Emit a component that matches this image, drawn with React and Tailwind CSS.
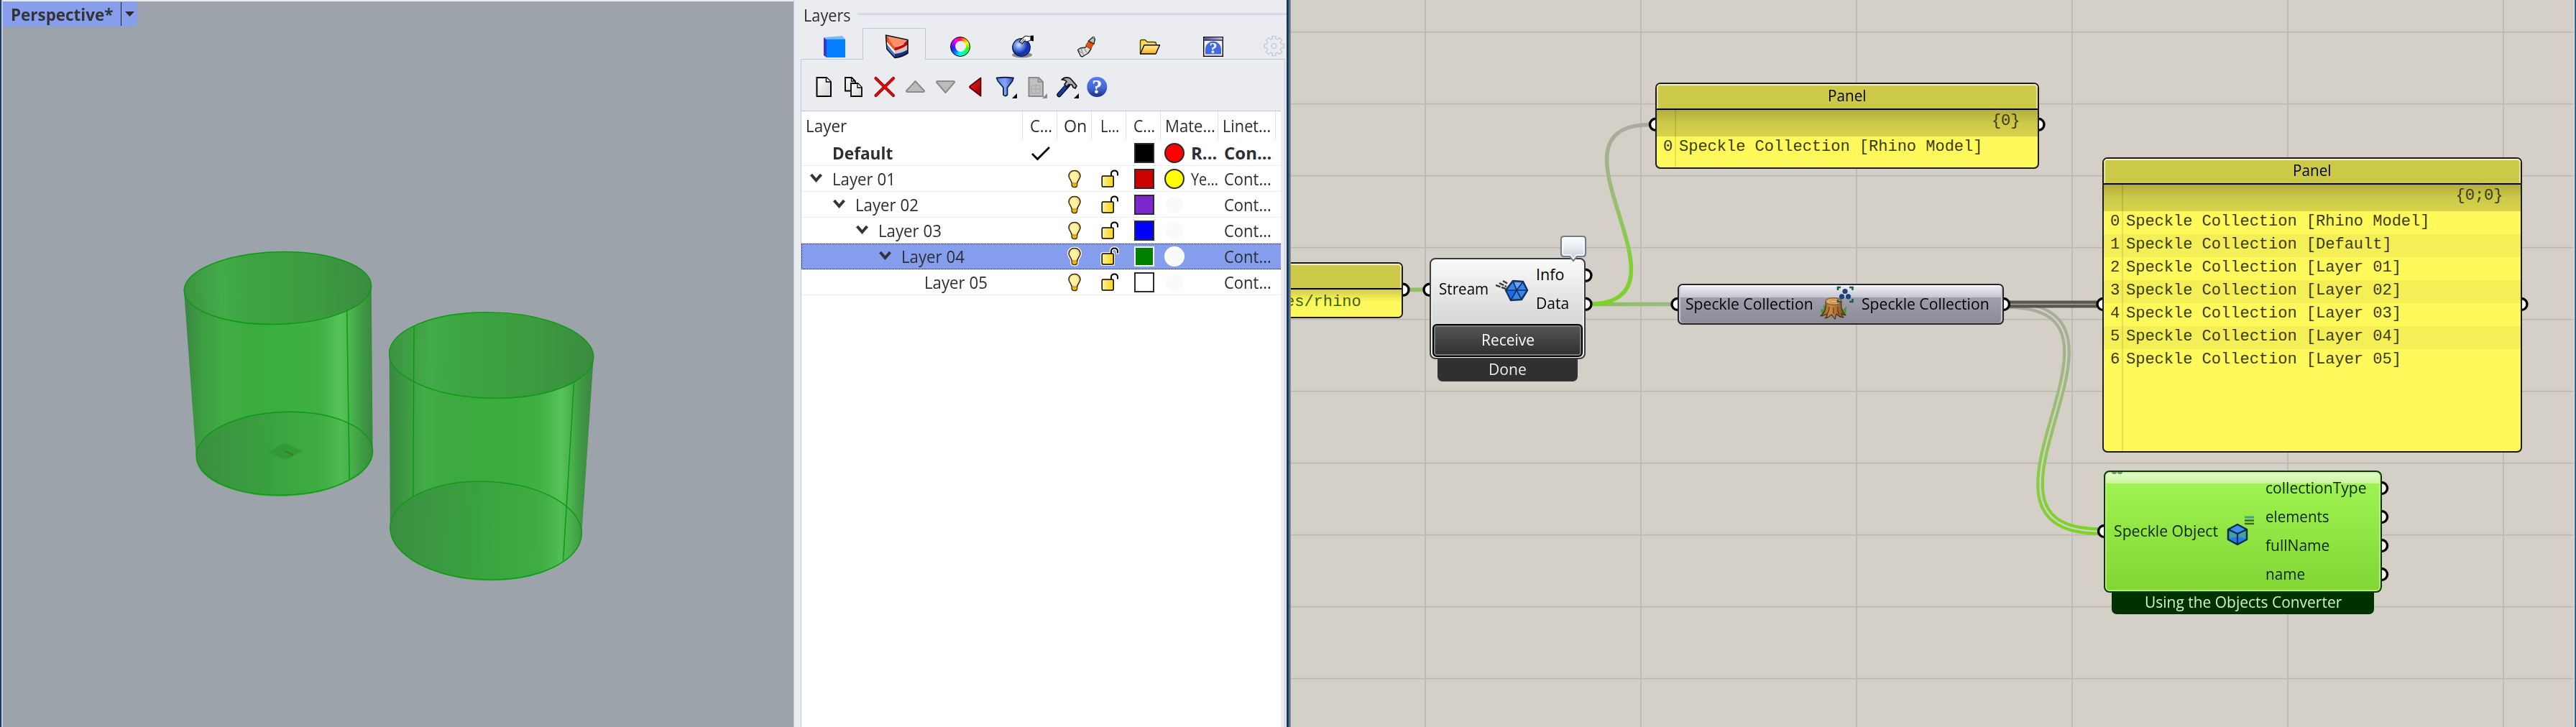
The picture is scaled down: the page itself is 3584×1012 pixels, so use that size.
import React, { useLayoutEffect, useRef, useState } from "react";

/* Text squeezed or stretched horizontally to a given width */
function Fit({ w, className = "", children }) {
  const ref = useRef(null);
  const [k, setK] = useState(1);
  useLayoutEffect(() => {
    setK(w / ref.current.offsetWidth);
  }, [w]);
  return (
    <span className={"block shrink-0 text-left " + className} style={{ width: w }}>
      <span ref={ref} className="inline-block origin-left whitespace-pre" style={{ transform: `scaleX(${k})` }}>
        {children}
      </span>
    </span>
  );
}

/* ---------- viewport ---------- */
function Viewport() {
  return (
    <section className="relative mt-[2px] h-[1010px] w-[1100px] shrink-0 overflow-hidden bg-[#9ca3ab]">
      <svg className="absolute inset-0" width="1100" height="1010" viewBox="4 2 1100 1010">
        <defs>
          <linearGradient id="body" x1="0" x2="1" y1="0" y2="0">
            <stop offset="0" stopColor="#3b8642" />
            <stop offset=".08" stopColor="#3c9a41" />
            <stop offset=".21" stopColor="#41ac45" />
            <stop offset=".36" stopColor="#3aac3f" />
            <stop offset=".55" stopColor="#3bb040" />
            <stop offset=".72" stopColor="#40b045" />
            <stop offset=".83" stopColor="#55c35a" />
            <stop offset=".88" stopColor="#4bb54f" />
            <stop offset=".94" stopColor="#3f9d43" />
            <stop offset="1" stopColor="#3b8640" />
          </linearGradient>
          <linearGradient id="body2" x1="0" x2="1" y1="0" y2="0">
            <stop offset="0" stopColor="#3b8642" />
            <stop offset=".08" stopColor="#3c9a41" />
            <stop offset=".17" stopColor="#43ac48" />
            <stop offset=".3" stopColor="#3ca940" />
            <stop offset=".6" stopColor="#3bad3f" />
            <stop offset=".73" stopColor="#3fb043" />
            <stop offset=".84" stopColor="#55c35a" />
            <stop offset=".89" stopColor="#4ab14e" />
            <stop offset=".95" stopColor="#3d9341" />
            <stop offset="1" stopColor="#3b8640" />
          </linearGradient>
          <linearGradient id="inside" x1="0" x2="1" y1="0" y2="0">
            <stop offset="0" stopColor="#3b9440" />
            <stop offset=".2" stopColor="#43aa49" />
            <stop offset=".35" stopColor="#3da441" />
            <stop offset=".7" stopColor="#3c9c40" />
            <stop offset="1" stopColor="#3b8b3f" />
          </linearGradient>
          <linearGradient id="floor" x1="0" x2="1" y1="0" y2="0">
            <stop offset="0" stopColor="#3a8e40" stopOpacity=".9" />
            <stop offset=".35" stopColor="#3a9a40" stopOpacity=".8" />
            <stop offset=".7" stopColor="#3ba440" stopOpacity=".35" />
            <stop offset="1" stopColor="#3ba440" stopOpacity=".1" />
          </linearGradient>
        </defs>
        <path d="M256 405L273 638A122.8 57.8 -2 0 0 518.6 628L516.7 397A130.3 50.3 -2 0 0 256 405Z" fill="url(#body)" />
        <ellipse cx="386.4" cy="401" rx="130.3" ry="50.3" transform="rotate(-1.7 386.4 401)" fill="url(#inside)" stroke="#0b9a10" strokeWidth="1.4" />
        <ellipse cx="395.9" cy="631.2" rx="122.8" ry="57.8" transform="rotate(-2 395.9 631.2)" fill="url(#floor)" stroke="#0b9a10" strokeWidth="1.4" />
        <path d="M482.7 432.3L486.2 667" stroke="#0b9a10" strokeWidth="1.5" />
        <path d="M372 629.5L396 617L421 628L397 640Z" fill="#329a35" />
        <path d="M397 628L408 622.5" stroke="#22a52a" strokeWidth="2" />
        <path d="M397 628L408 633.5" stroke="#3f7c22" strokeWidth="2" />

        <path d="M541.6 494L542.8 737A133.3 68.2 2.2 0 0 809.3 743L826 495A142.2 59.7 1.3 0 0 541.6 494Z" fill="url(#body2)" />
        <ellipse cx="683.7" cy="494.6" rx="142.2" ry="59.7" transform="rotate(1.3 683.7 494.6)" fill="url(#inside)" stroke="#0b9a10" strokeWidth="1.4" />
        <ellipse cx="676" cy="738.5" rx="133.3" ry="68.2" transform="rotate(2.2 676 738.5)" fill="url(#floor)" stroke="#0b9a10" strokeWidth="1.4" />
        <path d="M798.6 532L783.6 780.7M576 454L574.8 691.7" stroke="#0b9a10" strokeWidth="1.5" />
      </svg>
      <div className="relative flex h-[35px] w-[187px] items-center rounded-br-[5px] bg-[#869eec] pl-[11px] text-[24px] leading-[35px] font-bold text-[#333436]">
        <Fit w={142}>Perspective*</Fit>
        <span className="ml-[11px] h-[33px] w-px bg-[#222]" />
        <svg className="ml-[5px]" width="13" height="7" viewBox="0 0 13 7"><path d="M0 0H13L6.500 7Z" fill="#2b2b2e" /></svg>
      </div>
    </section>
  );
}

/* ---------- tab icons, 34 x 34 ---------- */
const TabSvg = ({ children }) => <svg width="34" height="34" viewBox="0 0 34 34" className="shrink-0">{children}</svg>;

const BoxIcon = () => (
  <TabSvg>
    <path d="M2 4L6 7V32L2 29Z" fill="#3a35cc" />
    <path d="M2 4L28 2L32 6.500H6Z" fill="#77bbff" />
    <path d="M6 6.500H32V32H6Z" fill="#047fff" />
  </TabSvg>
);
const LayersIcon = () => (
  <TabSvg>
    <path d="M1.500 1L32 7.500V26Q24 31.500 14 32.500L3 20.500Z" fill="#1b2f82" />
    <path d="M1.500 11L14 27Q24 26 32 21V14L1.500 6Z" fill="#c9c9c9" />
    <path d="M1.500 8L14 22.500V27L2 13Z" fill="#fff" />
    <path d="M2 13L14 27.500V31L3 20Z" fill="#4d74e0" />
    <path d="M1.500 2L14 18Q24 17 32 9V14Q24 20 14 22.500L1.500 8Z" fill="#d10000" />
    <path d="M1.500 2L14 18V22.500L1.500 8Z" fill="#ff5522" />
    <path d="M1.500 1L32 7.500Q26 14.500 14 17.500Z" fill="#ff9068" />
    <path d="M1.500 1L32 7.500V26Q24 31.500 14 32.500L3 20.500Z" fill="none" stroke="#111" strokeWidth="1.6" strokeLinejoin="round" />
  </TabSvg>
);
const WheelIcon = () => (
  <div className="flex h-7 w-7 items-center justify-center rounded-full border-[1.500px] border-black bg-[conic-gradient(#ff1040,#ff9000_30deg,#ffff00_60deg,#40ff00_100deg,#00ff90_145deg,#00ffff_185deg,#0080ff_220deg,#2020ff_255deg,#a000ff_290deg,#ff00ff_325deg,#ff1040_360deg)]">
    <div className="h-[15px] w-[15px] rounded-full bg-[#ebecf0]" />
  </div>
);
const SphereIcon = () => (
  <TabSvg>
    <defs>
      <radialGradient id="sph" cx=".36" cy=".36" r=".65">
        <stop offset="0" stopColor="#d7e6ff" />
        <stop offset=".35" stopColor="#6d92ea" />
        <stop offset=".75" stopColor="#1230a8" />
        <stop offset="1" stopColor="#1a3fc0" />
      </radialGradient>
    </defs>
    <ellipse cx="15" cy="28.500" rx="14" ry="4" fill="#8a8b8f" />
    <circle cx="14" cy="18" r="12.300" fill="url(#sph)" stroke="#0a1238" strokeWidth="1.200" />
    <path d="M11 10L17 4L20 2L27 3V8L22 10L18 9L15 13L13 11Z" fill="#fff" stroke="#222" strokeWidth="1.100" />
    <path d="M13 12L18 6M16 12L20 7" stroke="#222" strokeWidth=".9" />
    <path d="M27 1.500H31V9.500L27 8.500Z" fill="#000" />
  </TabSvg>
);
const TubeIcon = () => (
  <TabSvg>
    <path d="M4.500 21.500L8 19L15 18L18 15L23 20L19 26L11 31L8.500 30Z" fill="#dcdcdc" stroke="#222" strokeWidth="1.400" strokeLinejoin="round" />
    <path d="M9 20L13 29M6 22L10 26M13 18.500L17 25" stroke="#777" strokeWidth="1" />
    <path d="M15.500 15.500L19.500 9L27 13L22.500 20Q19 19 15.500 15.500Z" fill="#e4500f" stroke="#7c2c08" strokeWidth=".8" />
    <path d="M19.500 9L25 4L28.500 6.500L27 13Z" fill="#bbb" stroke="#222" strokeWidth="1.300" />
    <path d="M25 4L27 3L28.500 6.500" fill="#eee" stroke="#222" />
  </TabSvg>
);
const FolderIcon = () => (
  <TabSvg>
    <defs><linearGradient id="fold" x1="0" y1="0" x2="0" y2="1"><stop offset="0" stopColor="#fff3a0" /><stop offset="1" stopColor="#f8b010" /></linearGradient></defs>
    <path d="M3.500 27V9.500Q3.500 7.500 5.500 7.500H10L13.500 10.500H23Q25.500 10.500 25.500 13V18" fill="#f7dc4a" stroke="#4c3a00" strokeWidth="1.400" />
    <path d="M3.500 27L9 14.800H30.500L25 27Z" fill="url(#fold)" stroke="#000" strokeWidth="1.400" strokeLinejoin="round" />
  </TabSvg>
);
const HelpWindowIcon = () => (
  <TabSvg>
    <defs><linearGradient id="bar" x1="0" y1="0" x2="1" y2="0"><stop offset="0" stopColor="#4a44b4" /><stop offset="1" stopColor="#c0bff0" /></linearGradient></defs>
    <rect x="3.700" y="3.700" width="26.600" height="26.600" fill="#f3f3f6" stroke="#000" strokeWidth="1.400" />
    <rect x="4.400" y="4.400" width="25.200" height="3" fill="url(#bar)" />
    <path d="M4 8H30" stroke="#000" strokeWidth="1.200" />
    <path d="M6 27.500V21A11 11.500 0 0 1 28 21V27.500Z" fill="#4468e0" />
    <text x="17" y="26" textAnchor="middle" fill="#fff" fontFamily="Liberation Serif, serif" fontWeight="700" fontSize="22">?</text>
  </TabSvg>
);
const GearIcon = () => (
  <TabSvg>
    <path d="M14.200 3.500H18.800V7L21.500 8L24 5.500L27.500 9L25.200 11.700L26.500 14.500H30.500V19.500H26.500L25.200 22.300L27.700 25L24.200 28.500L21.500 26L18.800 27.200V30.500H14.200V27.200L11.500 26L8.800 28.500L5.300 25L7.800 22.300L6.500 19.500H3V14.500H6.500L7.800 11.700L5.500 9L9 5.500L11.500 8L14.200 7Z" fill="none" stroke="#c3cde0" strokeWidth="1.600" strokeLinejoin="round" />
    <circle cx="16.500" cy="17" r="3.500" fill="none" stroke="#c3cde0" strokeWidth="1.600" />
  </TabSvg>
);

/* ---------- toolbar icons ---------- */
const BarSvg = ({ children }) => <svg width="42.200" height="32" viewBox="-4 0 42.200 32" className="shrink-0 overflow-visible">{children}</svg>;
const Corner = ({ x = 25, fill = "#000" }) => <path d={`M${x} 32L${x + 7} 25V32Z`} fill={fill} />;

function ToolbarIcons() {
  return (
    <div className="flex h-[71px] items-center pt-[4px] pl-[10px]">
      <svg width="0" height="0" className="absolute">
        <defs>
          <linearGradient id="page" x1="0" y1="0" x2="1" y2="1"><stop offset="0" stopColor="#fff" /><stop offset="1" stopColor="#d2d2d2" /></linearGradient>
          <linearGradient id="redTri" x1="0" y1="0" x2="1" y2="1"><stop offset="0" stopColor="#ff2020" /><stop offset="1" stopColor="#8a0000" /></linearGradient>
          <linearGradient id="qm" x1="0" y1="0" x2="0" y2="1"><stop offset="0" stopColor="#5a7df2" /><stop offset=".55" stopColor="#4664d8" /><stop offset="1" stopColor="#1c2f88" /></linearGradient>
          <linearGradient id="cone" x1="0" y1="0" x2="1" y2="0"><stop offset="0" stopColor="#5581ec" /><stop offset=".5" stopColor="#86a6ff" /><stop offset="1" stopColor="#2d4cb0" /></linearGradient>
        </defs>
      </svg>
      <BarSvg><path d="M7.500 3H21L27 9V29H7.500Z" fill="url(#page)" stroke="#000" strokeWidth="2" /><path d="M20.500 3V9H27" fill="#fff" stroke="#000" strokeWidth="1.500" /></BarSvg>
      <BarSvg>
        <path d="M5 3H14L19 8V21.500H5Z" fill="url(#page)" stroke="#000" strokeWidth="1.800" /><path d="M13.500 3V8H19" fill="none" stroke="#000" strokeWidth="1.300" />
        <path d="M13 11H22.500L28 16.500V29H13Z" fill="url(#page)" stroke="#000" strokeWidth="1.800" /><path d="M22 11V17H28" fill="#fff" stroke="#000" strokeWidth="1.300" />
      </BarSvg>
      <BarSvg><path d="M5.500 4L30 28M30 4L5.500 28" stroke="#7c0606" strokeWidth="4.200" strokeLinecap="round" /><path d="M5.500 4L30 28M30 4L5.500 28" stroke="#dc0a0a" strokeWidth="2.800" strokeLinecap="round" /></BarSvg>
      <BarSvg><path d="M17.500 8L30 21.500Q30 23 28.500 23H6.500Q5 23 5 21.500Z" fill="#bcbcbc" stroke="#8c8c8c" strokeWidth="2" strokeLinejoin="round" /></BarSvg>
      <BarSvg><path d="M17.500 24L30 9.500Q30 8 28.500 8H6.500Q5 8 5 9.500Z" fill="#bcbcbc" stroke="#8c8c8c" strokeWidth="2" strokeLinejoin="round" /></BarSvg>
      <BarSvg><path d="M24.500 3.500V28.500L9.500 17Q8.500 16 9.500 15Z" fill="url(#redTri)" stroke="#5a0000" strokeWidth="1.800" strokeLinejoin="round" /></BarSvg>
      <BarSvg><path d="M4.500 3.500Q16 2 28 3.500L26.500 8L19.500 17V27Q16.500 30 14 27V17L6.500 8Z" fill="url(#cone)" stroke="#13234f" strokeWidth="1.800" strokeLinejoin="round" /><Corner x={26} /></BarSvg>
      <BarSvg><path d="M7.500 3H21L27 9V29H7.500Z" fill="#c0c0c0" stroke="#8a8a8a" strokeWidth="2" /><path d="M20.500 3V9H27" fill="none" stroke="#8a8a8a" strokeWidth="1.500" /><path d="M11 14H23V25H11ZM17 14V25M11 19H23" fill="none" stroke="#a6a6a6" strokeWidth="1" /><Corner x={26} fill="#8a8a8a" /></BarSvg>
      <BarSvg>
        <path d="M19 13L6.500 27" stroke="#0a1230" strokeWidth="6.500" strokeLinecap="round" />
        <path d="M19 12L6.800 26.700" stroke="#1f3e9c" strokeWidth="3.800" strokeLinecap="round" />
        <path d="M10 6Q15 1 22 4L29 12L31 14.500L29 18L26 16.500L24.500 13L20 12.500L17 16L14 12.500L17 8.500Q14 5.500 10 6Z" fill="#a9a9a9" stroke="#111" strokeWidth="1.700" strokeLinejoin="round" />
        <Corner x={27} />
      </BarSvg>
      <BarSvg><circle cx="17.300" cy="16" r="14" fill="url(#qm)" /><text x="17.300" y="25.500" textAnchor="middle" fill="#fff" fontFamily="Liberation Serif, serif" fontWeight="700" fontSize="28">?</text></BarSvg>
    </div>
  );
}

/* ---------- layer rows ---------- */
const halo = "[filter:drop-shadow(1px_0_0_white)_drop-shadow(-1px_0_0_white)_drop-shadow(0_1px_0_white)_drop-shadow(0_-1px_0_white)]";
const Bulb = ({ glow }) => (
  <svg width="18" height="26" viewBox="0 0 18 26" className={"ml-[15px] " + (glow ? halo : "")}>
    <defs><radialGradient id="bulb" cx=".45" cy=".4" r=".6"><stop offset="0" stopColor="#fff7ae" /><stop offset=".5" stopColor="#fff0a0" /><stop offset="1" stopColor="#f0b040" /></radialGradient></defs>
    <path d="M9 1.500C4 1.500 1 4.800 1 9C1 13 5 14.500 5.300 20V22.500Q6 24.500 9 24.500Q12 24.500 12.500 22.500V20C13 14.500 17 13 17 9C17 4.800 14 1.500 9 1.500Z" fill="url(#bulb)" stroke="#3a2600" strokeWidth="1.500" />
    <path d="M5.800 20H12.200V22.300Q11 23.800 9 23.800Q7 23.800 5.800 22.300Z" fill="#eab500" />
    <path d="M5.500 19H12.500" stroke="#a86f00" strokeWidth="1" />
  </svg>
);
const Lock = ({ glow }) => (
  <svg width="26" height="26" viewBox="0 0 26 26" className={"ml-[13px] " + (glow ? halo : "")}>
    <defs><linearGradient id="lock" x1="0" y1="0" x2="1" y2="0"><stop offset="0" stopColor="#fff09a" /><stop offset="1" stopColor="#fad21a" /></linearGradient></defs>
    <path d="M14 9V6Q14 1.500 18.500 1.500Q23 1.500 23 6V8.500" fill="none" stroke="#000" strokeWidth="2" />
    <rect x="1.200" y="9" width="16" height="15" rx="1.500" fill="url(#lock)" stroke="#000" strokeWidth="1.500" />
  </svg>
);

const COLS = "grid grid-cols-[308px_48px_48px_48px_48px_80px_80px]";

const rows = [
  { name: "Default", w: 84, pad: "pl-[43px]", current: true, swatch: "bg-black", dot: "bg-[#ff0000] border-[#2b2c30]", mat: ["R...", 36], line: ["Con...", 66], bold: true },
  { name: "Layer 01", w: 88, pad: "pl-[12px]", swatch: "bg-[#cc0000]", dot: "bg-[#ffff00] border-[#2b2c30]", mat: ["Ye...", 38], line: ["Cont...", 66], open: true },
  { name: "Layer 02", w: 88, pad: "pl-[44px]", swatch: "bg-[#7d26cd]", dot: "bg-[#fafafa] border-white", line: ["Cont...", 66], open: true },
  { name: "Layer 03", w: 88, pad: "pl-[76px]", swatch: "bg-[#0000ff]", dot: "bg-[#fafafa] border-white", line: ["Cont...", 66], open: true },
  { name: "Layer 04", w: 88, pad: "pl-[108px]", swatch: "bg-[#008000]", dot: "bg-[#fafafa] border-white", line: ["Cont...", 66], open: true, selected: true },
  { name: "Layer 05", w: 88, pad: "pl-[171px]", swatch: "bg-white", dot: "bg-[#fafafa] border-white", line: ["Cont...", 66] },
];

function LayerRow({ r }) {
  return (
    <div className={`${COLS} relative h-9 ${r.bold ? "font-bold" : ""} ${r.selected ? "bg-[#859eee]" : "border-b border-[#ececee]"}`}>
      {r.selected && <div className="absolute inset-0 border-y border-l border-dotted border-[#1b1b1b]" />}
      <div className={`flex ${r.pad}`}>
        {r.open && (
          <svg width="17" height="13" viewBox="0 0 17 13" className="mt-[10px] mr-[14px] shrink-0"><path d="M1.500 2L8.500 10L15.500 2" fill="none" stroke="#333438" strokeWidth="4" /></svg>
        )}
        <Fit w={r.w}>{r.name}</Fit>
      </div>
      <div>
        {r.current && <svg width="27" height="21" viewBox="0 0 27 21" className="mt-[8px] ml-[12px]"><path d="M1 11L8.500 18.500L25 2" fill="none" stroke="#000" strokeWidth="2.800" /></svg>}
      </div>
      <div className="pt-[5px]">{!r.current && <Bulb glow={r.selected} />}</div>
      <div className="pt-[5px]">{!r.current && <Lock glow={r.selected} />}</div>
      <div className="pt-1 pl-[11px]"><div className={`h-7 w-7 border-2 ${r.selected ? "border-white" : "border-[#2b2c30]"} ${r.swatch}`} /></div>
      <div className="flex pt-1 pl-[5px]">
        <div className={`h-7 w-7 shrink-0 rounded-full border-2 ${r.dot}`} />
        {r.mat && <Fit w={r.mat[1]} className="-mt-1 ml-[9px]">{r.mat[0]}</Fit>}
      </div>
      <div className="pl-[8px]"><Fit w={r.line[1]}>{r.line[0]}</Fit></div>
    </div>
  );
}

function LayersPanel() {
  const tabs = [BoxIcon, LayersIcon, WheelIcon, SphereIcon, TubeIcon, FolderIcon, HelpWindowIcon];
  const heads = [["Layer", 57, "pl-[6px]"], ["C...", 31, "pl-[10px]"], ["On", 32, "pl-[9px]"], ["L...", 26, "pl-[12px]"], ["C...", 30, "pl-[10px]"], ["Mate...", 70, "pl-[6px]"], ["Linet...", 67, "pl-[6px]"]];
  return (
    <section className="flex h-[1012px] w-[686px] shrink-0 flex-col border-l border-[#c3cbe0] bg-[#ebecf0] pl-[9px] text-[24px] leading-9 text-[#2d2e33]">
      <div className="flex h-[39px] items-center pl-[4px]">
        <Fit w={66} className="mt-[3px]">Layers</Fit>
        <div className="ml-[9px] h-[3px] flex-1 border-y border-[#c9cfe2]" />
      </div>
      <div className="flex h-[44px] w-[674px] border-b border-[#bdc6dc]">
        {tabs.map((Icon, i) => (
          <div key={i} className={`flex h-[44px] shrink-0 items-center justify-center pt-[7px] pl-[8px] ${i === 0 ? "w-[86px] pl-[6px]" : "w-[88px]"} ${i === 1 ? "rounded-t-[1px] border border-b-0 border-[#bdc6dc] bg-[#ebecf0]" : ""}`}>
            <Icon />
          </div>
        ))}
        <div className="flex w-[62px] shrink-0 items-center justify-end pt-[7px]"><GearIcon /></div>
      </div>
      <div className="w-[674px] flex-1 border-x border-[#bdc6dc]">
        <ToolbarIcons />
        <div className="h-[858px] w-[667px] border-t border-[#bdc6dc] bg-white">
          <div className={`${COLS} h-[40px] leading-[40px]`}>
            {heads.map(([t, w, p], i) => (
              <div key={i} className={`border-r border-[#dcdee6] ${p}`}><Fit w={w}>{t}</Fit></div>
            ))}
          </div>
          {rows.map((r) => <LayerRow key={r.name} r={r} />)}
        </div>
      </div>
    </section>
  );
}

/* ---------- node canvas ---------- */
function Wires() {
  const grips = [[1952, 403.3], [1989, 403.3], [2206, 383.3], [2206, 423.3], [2303.500, 173.300], [2836, 173.300], [2334, 423.500], [2787.500, 423.500], [2926, 423.500], [3508, 423.500], [2927.500, 739.500], [3313.500, 679.500], [3313.500, 719.500], [3313.500, 759.500], [3313.500, 799.500]];
  const hs = [44.7, 144.7, 244.7, 344.7, 444.7, 544.7, 644.7, 744.7, 844.7, 944.7];
  const vs = [1983, 2283, 2583, 2883, 3183, 3483];
  const loop = "M2792 424.500C3012 424.500 2702 739.500 2922 739.500";
  return (
    <svg className="absolute inset-0" width="1785" height="1012" viewBox="1796 0 1785 1012">
      <defs>
        <linearGradient id="w1" gradientUnits="userSpaceOnUse" x1="0" y1="424" x2="0" y2="173"><stop offset="0" stopColor="#7bd424" /><stop offset=".25" stopColor="#84cf38" /><stop offset=".6" stopColor="#9bbd78" /><stop offset="1" stopColor="#aaaa9f" /></linearGradient>
        <linearGradient id="w2" gradientUnits="userSpaceOnUse" x1="2215" y1="0" x2="2330" y2="0"><stop offset="0" stopColor="#86c653" /><stop offset="1" stopColor="#9fb68c" /></linearGradient>
        <linearGradient id="w3" gradientUnits="userSpaceOnUse" x1="0" y1="424" x2="0" y2="740"><stop offset="0" stopColor="#a9ab9e" /><stop offset=".35" stopColor="#9dba7f" /><stop offset=".75" stopColor="#8acb4a" /><stop offset="1" stopColor="#7bd424" /></linearGradient>
      </defs>
      {hs.map((y) => <path key={y} d={`M1796 ${y}H3581`} stroke="#bcb8b0" strokeWidth="1.800" />)}
      {vs.map((x) => <path key={x} d={`M${x} 0V1012`} stroke="#bcb8b0" strokeWidth="1.600" />)}
      <path d="M1955 403.300H1985" stroke="#92c065" strokeWidth="5.600" />
      <path d="M2210 423.500H2330" stroke="url(#w2)" strokeWidth="5.600" />
      <path d="M2208 423.500C2375 423.500 2130 173.500 2297 173.500" fill="none" stroke="url(#w1)" strokeWidth="5.600" />
      <path d={loop} fill="none" stroke="url(#w3)" strokeWidth="10.800" />
      <path d={loop} fill="none" stroke="#d4cfc7" strokeWidth="2.400" />
      <path d="M2790 423.500H2924" stroke="#57574f" strokeWidth="10" />
      <path d="M2790 423.500H2924" stroke="#a9a79c" strokeWidth="1.600" />
      {grips.map(([x, y], i) => <circle key={i} cx={x} cy={y} r="8" fill="#fff" stroke="#000" strokeWidth="3.400" />)}
    </svg>
  );
}

const MONO = "font-['Liberation_Mono',monospace] text-[22px] whitespace-pre text-[#3c3b0c]";

function Panel({ className, path, lines }) {
  return (
    <div className={`absolute flex flex-col overflow-hidden rounded-[7px] border-2 border-[#1c1c1c] bg-[#fff95b] ${className}`}>
      <div className="flex h-[36px] shrink-0 justify-center rounded-t-[5px] border-b-2 border-black bg-[#ccc848] text-[21.500px] leading-[32px] text-black shadow-[inset_0_2px_0_#f4f2c4,inset_2px_0_0_#e4e2a0,inset_-2px_0_0_#e4e2a0]">
        <Fit w={54}>Panel</Fit>
      </div>
      <div className="relative flex-1">
        <div className={`h-[37px] bg-gradient-to-b from-[#b3ae3c] via-[#cdc949] to-[#d6d24c] pr-[24px] text-right leading-[32px] ${MONO}`}>{path}</div>
        {lines.map((l, i) => (
          <div key={i} className={`h-8 ${i % 2 ? "bg-[#f4ef57]" : ""}`}>
            <div className={`flex h-[29px] leading-[29px] ${MONO}`}>
              <span className="w-[31px] pl-[9px]">{i}</span>
              <span>{l}</span>
            </div>
          </div>
        ))}
        <div className="absolute inset-y-0 left-[25px] w-[2px] bg-black/10" />
      </div>
    </div>
  );
}

const SpeckleCube = ({ className }) => (
  <svg width="32" height="34" viewBox="0 0 32 34" className={className}>
    <path d="M16 3L29 10V24L16 31L3 24V10Z" fill="#2478f6" />
    <path d="M16 3L29 10L16 16L3 10Z" fill="#3b8ff0" />
    <path d="M3 10L16 16V20L3 23ZM29 10L16 16V20L29 23Z" fill="#3fa3a0" />
    <path d="M3 10L16 16L29 10M16 16V31" fill="none" stroke="#0e2c4c" strokeWidth="2.200" />
    <path d="M16 3L29 10V24L16 31L3 24V10Z" fill="none" stroke="#0e2c4c" strokeWidth="2.500" strokeLinejoin="round" />
  </svg>
);

function ReceiveNode() {
  return (
    <div className="absolute top-[359px] left-[193px] w-[217px] text-[21.500px]">
      <div className="h-[141px] rounded-[8px] border-2 border-[#3c3c3c] bg-gradient-to-b from-[#fafafa] via-[#dedede] to-[#cccccc] px-[2px] pt-px text-black shadow-[inset_0_0_0_1.500px_#f5f5f5]">
        <div className="flex h-[80px]">
          <Fit w={69} className="ml-[9px] leading-[80px]">Stream</Fit>
          <svg width="46" height="34" viewBox="0 0 46 34" className="mt-[24px] ml-[10px]">
            <path d="M0 11L14 16M5 8L15 13M10 5L17 9" stroke="#3a3a3a" strokeWidth="2.400" strokeDasharray="7 1.500" />
            <path d="M24 5L38 6L44 18L36 31L21 32L14 18Z" fill="#3b82ee" stroke="#12345c" strokeWidth="2.500" strokeLinejoin="round" />
            <path d="M16 18L28 19L22 31Z" fill="#1a68f4" />
            <path d="M25 7L36 7L30 16Z" fill="#6ba4f4" />
            <path d="M24 5L29 18L44 18M36 31L29 18L14 18M29 18L38 6M29 18L21 32" fill="none" stroke="#12345c" strokeWidth="1.700" />
          </svg>
          <div className="ml-[10px] leading-[40px]">
            <Fit w={39}>Info</Fit>
            <Fit w={46}>Data</Fit>
          </div>
        </div>
        <div className="mt-[9px] flex h-[46px] w-[209px] justify-center rounded-[6px] border-2 border-black bg-gradient-to-b from-[#565656] to-[#303030] leading-[40px] text-white shadow-[inset_0_0_0_2px_#777]">
          <Fit w={74}>Receive</Fit>
        </div>
      </div>
      <div className="mx-auto flex h-[31px] w-[195px] justify-center rounded-b-[7px] bg-[#303030] leading-[27px] text-[#eeeeee]">
        <Fit w={53}>Done</Fit>
      </div>
      <svg width="40" height="42" viewBox="0 0 40 42" className="absolute -top-[33px] left-[180px]">
        <defs><linearGradient id="bub" x1="0" y1="0" x2="0" y2="1"><stop offset="0" stopColor="#fdfdfe" /><stop offset=".5" stopColor="#e8e9ee" /><stop offset="1" stopColor="#bcc0cf" /></linearGradient></defs>
        <path d="M7 3H33Q37 3 37 7V27Q37 31 33 31H25L20 37L15 31H7Q3 31 3 27V7Q3 3 7 3Z" fill="url(#bub)" stroke="#6f7f8b" strokeWidth="2.200" />
        <path d="M8 5H32Q35 5 35 8V26Q35 29 32 29H24L20 34L16 29H8Q5 29 5 26V8Q5 5 8 5Z" fill="none" stroke="#fff" strokeWidth="1.500" />
      </svg>
    </div>
  );
}

function CollectionNode() {
  return (
    <div className="absolute top-[394.500px] left-[537.500px] flex h-[57.500px] w-[454.500px] rounded-[7px] border-2 border-[#26262a] bg-[linear-gradient(#f0f0f3_0,#c6c6cf_17px,#9f9eac_17px,#8c8b98)] text-[21.500px] leading-[52px] text-black shadow-[inset_0_1.500px_0_#fff,inset_-2px_0_1px_#c8c8d0,inset_2px_0_1px_#c8c8d0]">
      <Fit w={178} className="ml-[9px]">Speckle Collection</Fit>
      <svg width="52" height="50" viewBox="2532 397 52 50" className="ml-[7px] shrink-0">
        <defs><linearGradient id="bark" x1="0" y1="0" x2="1" y2="0"><stop offset="0" stopColor="#8a5524" /><stop offset=".4" stopColor="#c98a48" /><stop offset="1" stopColor="#7a4b20" /></linearGradient></defs>
        <path d="M2536 436L2535 429L2539 432L2539 424L2544 430L2546 438ZM2562 437L2563 428L2567 431L2571 426L2570 437Z" fill="#3f9a2a" />
        <path d="M2542 420C2543 430 2541 434 2535 440C2539 440 2541 438 2544 437C2544 440 2543 442 2541 443C2546 443 2548 440 2550 438C2552 440 2553 442 2555 444C2556 441 2556 439 2557 437C2560 440 2563 442 2567 442C2565 440 2564 438 2564 436C2566 438 2568 439 2570 439C2565 434 2563 430 2564 420Z" fill="url(#bark)" stroke="#4a2d12" strokeWidth="1.200" strokeLinejoin="round" />
        <path d="M2547 427Q2547 433 2544 437M2553 428V437M2559 427Q2558 433 2561 438" fill="none" stroke="#5f3a17" strokeWidth="1.200" />
        <ellipse cx="2553" cy="419.500" rx="11" ry="4.800" fill="#e3ae72" stroke="#8d5c2b" strokeWidth="1.500" />
        <ellipse cx="2553" cy="419.500" rx="5.500" ry="2.200" fill="none" stroke="#bb8448" />
        <circle cx="2569" cy="405.500" r="3.600" fill="#1c4279" /><circle cx="2564.500" cy="412.800" r="3.600" fill="#1c4279" /><circle cx="2573.500" cy="412.800" r="3.600" fill="#1c4279" />
        <path d="M2559 404V400H2563M2575 400H2579.500V404M2579.500 416V420H2575M2564 420H2559V417" fill="none" stroke="#1d5a50" strokeWidth="2.600" />
      </svg>
      <Fit w={178} className="ml-[8px]">Speckle Collection</Fit>
    </div>
  );
}

function ObjectNode() {
  return (
    <div className="absolute top-[654.500px] left-[1131px] w-[387px] text-[21.500px] text-[#0c2400]">
      <div className="flex h-[170px] rounded-[8px] border-2 border-[#0a3a06] bg-[linear-gradient(#e6fcd2_0,#c6f59a_16px,#9ff350_16px,#82d634)] shadow-[inset_0_0_0_1.500px_#c3f296]">
        <Fit w={145} className="ml-[12px] leading-[164px]">Speckle Object</Fit>
        <div className="relative mt-[61px] ml-[12px] h-[44px] w-[40px] shrink-0">
          <SpeckleCube className="absolute top-[9px] -left-[1px]" />
          <svg width="13" height="13" viewBox="0 0 13 13" className="absolute top-0 left-[25px]"><path d="M0 2H13" stroke="#37a59a" strokeWidth="3" /><path d="M0 6.500H13M0 11H13" stroke="#3c6a20" strokeWidth="2.600" /></svg>
        </div>
        <div className="mt-[2px] ml-[14px] leading-[40px]">
          <Fit w={141}>collectionType</Fit>
          <Fit w={89}>elements</Fit>
          <Fit w={89}>fullName</Fit>
          <Fit w={55}>name</Fit>
        </div>
      </div>
      <div className="absolute top-[2px] left-[11px] flex gap-[1px]">
        <i className="h-[3px] w-[7px] rounded-b-full bg-[#6f9a60]" />
        <i className="h-[3px] w-[7px] rounded-b-full bg-[#6f9a60]" />
      </div>
      <div className="mx-auto flex h-[30px] w-[365px] justify-center rounded-b-[7px] bg-[#003200] leading-[26px] text-[#c9f7bd]">
        <Fit w={274}>Using the Objects Converter</Fit>
      </div>
    </div>
  );
}

function NodeCanvas() {
  return (
    <section className="relative h-[1012px] w-[1785px] shrink-0 overflow-hidden bg-[#d4cfc7]">
      <Wires />
      <div className="absolute top-[364.500px] -left-[60px] h-[78px] w-[216px] overflow-hidden rounded-[7px] border-2 border-[#1c1c1c] bg-[#fff95b]">
        <div className="h-[36px] rounded-tr-[5px] border-b-2 border-black bg-[#ccc848] shadow-[inset_0_2px_0_#f4f2c4,inset_-2px_0_0_#e4e2a0]" />
        <div className="h-[38px] bg-gradient-to-b from-[#d0cc49] to-[#fff95b] to-45% pl-[50px] font-['Liberation_Mono',monospace] text-[22px] leading-[35px] text-[#3c6014]">es/rhino</div>
      </div>
      <ReceiveNode />
      <Panel className="top-[114.500px] left-[507px] h-[120px] w-[533.500px]" path="{0}" lines={["Speckle Collection [Rhino Model]"]} />
      <Panel
        className="top-[218.500px] left-[1129px] h-[411.500px] w-[583.500px]"
        path="{0;0}"
        lines={["Rhino Model", "Default", "Layer 01", "Layer 02", "Layer 03", "Layer 04", "Layer 05"].map((n) => `Speckle Collection [${n}]`)}
      />
      <CollectionNode />
      <ObjectNode />
    </section>
  );
}

export default function App() {
  return (
    <div className="flex h-[1012px] w-[3584px] overflow-hidden bg-[#ebecf0] font-['Open_Sans','Noto_Sans',sans-serif]">
      <div className="w-[4px] shrink-0 border-r-2 border-[#c3cbe0] bg-[#1b3d62]" />
      <Viewport />
      <LayersPanel />
      <div className="flex w-[6px] shrink-0">
        <div className="w-[2px] bg-[#15324f]" />
        <div className="w-[2px] bg-[#2c5677]" />
        <div className="w-[2px] bg-[#8a8886]" />
      </div>
      <NodeCanvas />
      <div className="w-[3px] shrink-0 border-l border-[#f2f2f2] bg-[#2a5f8f]" />
    </div>
  );
}
